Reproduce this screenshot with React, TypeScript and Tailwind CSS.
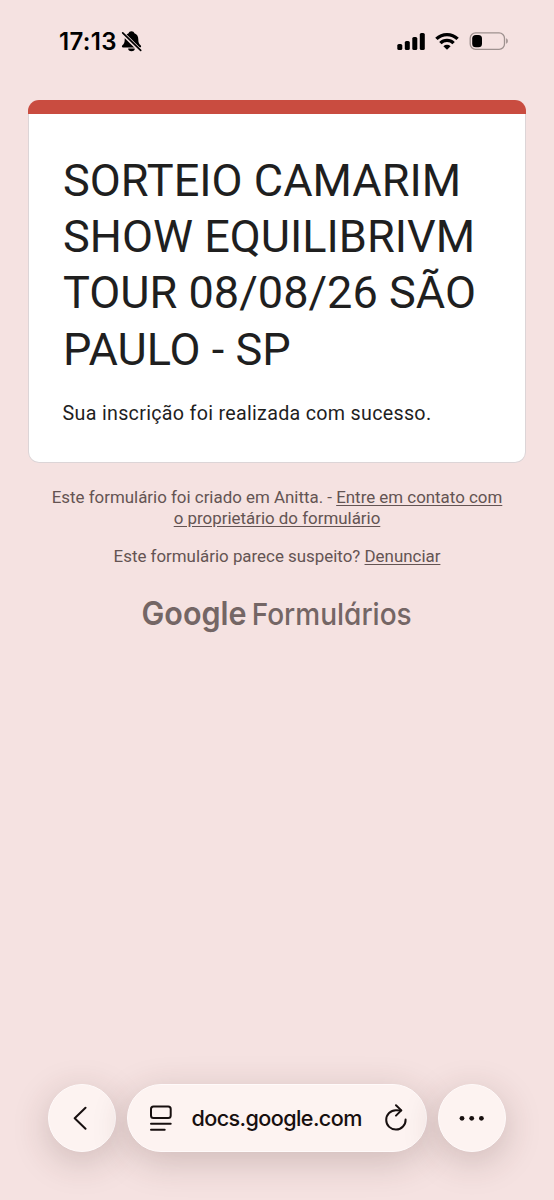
import React from "react";

function StatusBar() {
  return (
    <header className="flex h-[82px] shrink-0 items-center justify-between pl-[59px] pr-[45px] text-black">
      <div className="flex items-center gap-[5px]">
        <span className="w-[57px] whitespace-nowrap pt-px font-['Inter',sans-serif] text-[24px] font-semibold leading-[28px] tracking-[0.300px]">
          17:13
        </span>
        <svg className="h-[22px] w-[21px]" viewBox="0 0 21 22" fill="none">
          <path
            d="M10.500 1.200c-1.500 0-2.600.8-2.900 2C4.900 4.200 3.700 6.400 3.700 9.200c0 3.400-.7 4.600-2.300 6-.9.8-.6 2.300.7 2.300h16.800c1.300 0 1.600-1.500.7-2.300-1.600-1.400-2.300-2.600-2.300-6 0-2.800-1.200-5-3.900-6-.3-1.200-1.400-2-2.900-2Z"
            fill="#000"
          />
          <path d="M7.200 18.600h6.600a3.300 2.600 0 0 1-6.600 0Z" fill="#000" />
          <path d="M1 2.800 19.200 20.600" stroke="#f5e2e1" strokeWidth="4" />
          <path d="M1.700 2.800 19.700 20.400" stroke="#000" strokeWidth="1.700" strokeLinecap="round" />
        </svg>
      </div>
      <div className="flex items-center">
        <svg className="h-[18px] w-[28px]" viewBox="0 0 28 18" fill="#000">
          <rect x="0.300" y="12" width="5" height="6" rx="1.600" />
          <rect x="7.800" y="8.900" width="5" height="9.100" rx="1.600" />
          <rect x="15.300" y="5" width="5" height="13" rx="1.600" />
          <rect x="22.800" y="1" width="5" height="17" rx="1.600" />
        </svg>
        <svg className="ml-[10px] h-[18px] w-[24px]" viewBox="0 0 24 18" fill="none" stroke="#000" strokeWidth="3.400">
          <path d="M1.400 6.900a15.200 15.200 0 0 1 21.200 0" />
          <path d="M5.400 11.100a9.400 9.400 0 0 1 13.200 0" />
          <path d="M12 17.800 8.400 14.200a5.100 5.100 0 0 1 7.200 0Z" fill="#000" stroke="none" />
        </svg>
        <svg className="ml-[10px] h-[18px] w-[40px]" viewBox="0 0 40 18" fill="none">
          <rect x="1.200" y="0.900" width="34.300" height="16.400" rx="5.400" stroke="#9e918f" strokeWidth="1.300" />
          <path d="M37.100 6.200v5.600c1.200-.4 1.700-1.500 1.700-2.800s-.5-2.400-1.700-2.800Z" fill="#9e918f" />
          <rect x="3.200" y="2.900" width="9.800" height="12.400" rx="3.600" fill="#000" />
        </svg>
      </div>
    </header>
  );
}

function ConfirmationCard() {
  return (
    <section className="mx-[28px] mt-[18px] flex h-[363px] flex-col overflow-hidden rounded-[11px]">
      <div className="h-[14px] shrink-0 bg-[#c94c40]" />
      <div className="grow rounded-b-[11px] border border-t-0 border-[#dcd5d7] bg-white pl-[34px] pt-[38.600px]">
        <h1 className="whitespace-nowrap text-[45.100px] font-normal leading-[56.400px] text-[#1f1f1f]">
          SORTEIO CAMARIM
          <br />
          SHOW EQUILIBRIVM
          <br />
          TOUR 08/08/26 SÃO
          <br />
          PAULO - SP
        </h1>
        <p className="-ml-[0.400px] mt-[21.400px] whitespace-nowrap text-[19.700px] leading-[28px] tracking-[0.290px] text-[#1f1f1f]">
          Sua inscrição foi realizada com sucesso.
        </p>
      </div>
    </section>
  );
}

function FormFooter() {
  return (
    <footer className="flex flex-col items-center pt-[24px] text-center text-[16.900px] leading-[21px] text-[#645453]">
      <p className="whitespace-nowrap">
        Este formulário foi criado em Anitta. -{" "}
        <a className="underline underline-offset-2">
          Entre em contato com
          <br />o proprietário do formulário
        </a>
      </p>
      <p className="mt-[17px] whitespace-nowrap">
        Este formulário parece suspeito? <a className="underline underline-offset-2">Denunciar</a>
      </p>
      <svg className="mt-[17px] h-[60px] w-[300px] overflow-visible text-[#746665]" viewBox="0 0 300 60" fill="currentColor">
        <text x="14.500" y="41.300" fontFamily="Inter, sans-serif" fontSize="33" fontWeight="600" textLength="105" lengthAdjust="spacingAndGlyphs">
          Google
        </text>
        <text
          className="[font-feature-settings:'cv11']"
          x="124.700"
          y="41.300"
          fontFamily="Inter, sans-serif"
          fontSize="30.500"
          fontWeight="500"
          textLength="160"
          lengthAdjust="spacingAndGlyphs"
        >
          Formulários
        </text>
      </svg>
    </footer>
  );
}

const glass =
  "flex h-[68px] items-center rounded-full border border-[#fffafa] bg-[#fdf3f1] shadow-[0_9px_36px_rgba(70,40,36,0.22)]";

function BrowserBar() {
  return (
    <nav className="mt-auto flex shrink-0 justify-center gap-[11px] pb-[48px] text-[#170f0f]">
      <button className={`${glass} w-[68px] justify-center`} aria-label="Voltar">
        <svg className="h-[24px] w-[16px] -translate-x-[2px]" viewBox="0 0 16 24" fill="none" stroke="currentColor" strokeWidth="2" strokeLinecap="round" strokeLinejoin="round">
          <path d="M13.500 1.700 2.700 12.300l10.800 10.500" />
        </svg>
      </button>
      <div className={`${glass} w-[300px] pl-[22px] pr-[19px]`}>
        <svg className="h-[26px] w-[22px]" viewBox="0 0 22 26" fill="none" stroke="currentColor" strokeWidth="2" strokeLinecap="round">
          <rect x="1" y="1.400" width="19.700" height="11.600" rx="2.500" />
          <path d="M1 18.700h19.700M1 24.700h13.700" />
        </svg>
        <span className="ml-[19.500px] whitespace-nowrap font-['Inter',sans-serif] text-[21.600px] font-medium leading-[28px] tracking-[-0.600px]">
          docs.google.com
        </span>
        <svg className="ml-auto h-[28px] w-[22px]" viewBox="0 0 22 28" fill="none" stroke="currentColor" strokeWidth="2" strokeLinecap="round" strokeLinejoin="round">
          <path d="M20.600 15.500A9.700 9.700 0 1 1 11 6.200l5 .2" />
          <path d="m11 1.300 5.300 5.100L11 11.600" />
        </svg>
      </div>
      <button className={`${glass} w-[68px] justify-center`} aria-label="Mais">
        <svg className="h-[6px] w-[26px]" viewBox="0 0 26 6" fill="currentColor">
          <circle cx="3" cy="3.300" r="2.400" />
          <circle cx="12.700" cy="3.300" r="2.400" />
          <circle cx="22.400" cy="3.300" r="2.400" />
        </svg>
      </button>
    </nav>
  );
}

export default function App() {
  return (
    <main className="flex h-[1200px] w-[554px] flex-col overflow-hidden bg-[#f5e2e1] font-['Roboto',sans-serif]">
      <StatusBar />
      <ConfirmationCard />
      <FormFooter />
      <BrowserBar />
    </main>
  );
}
